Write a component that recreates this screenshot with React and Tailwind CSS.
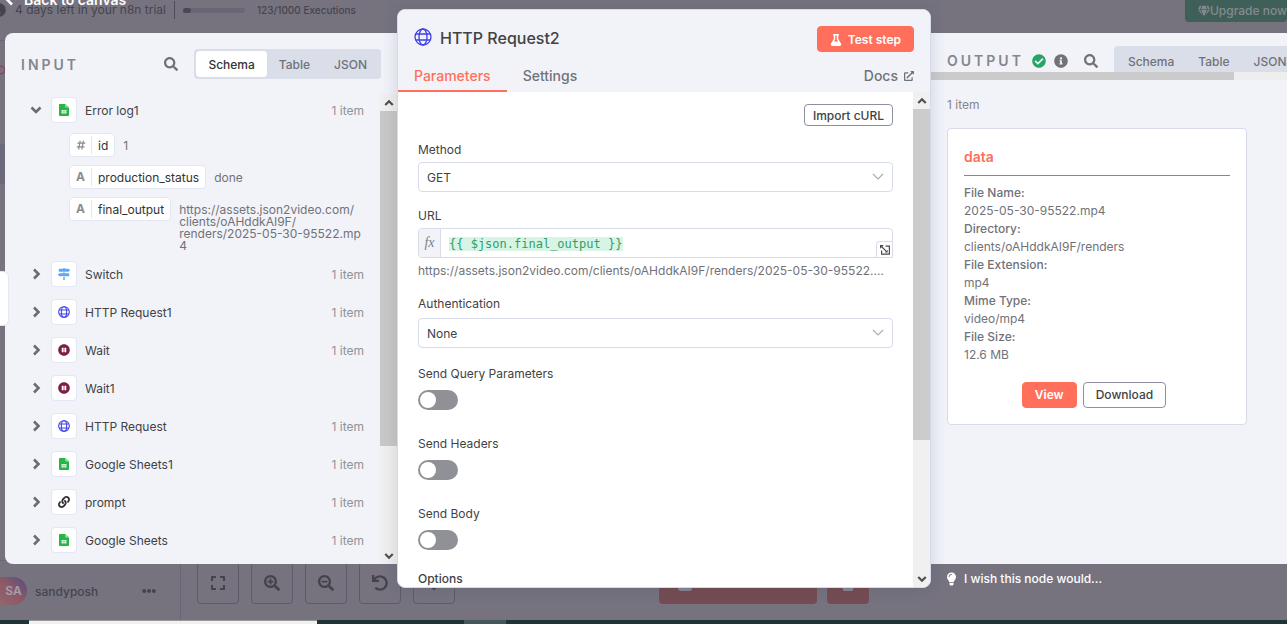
import React from "react";
import {
  FaSearch, FaSearchPlus, FaSearchMinus, FaFlask, FaExternalLinkAlt, FaMapSigns, FaGem, FaUndo,
  FaExpand, FaLink, FaInfoCircle, FaCheckCircle, FaLightbulb, FaHashtag, FaPauseCircle, FaHeart,
  FaEllipsisH, FaTrash,
} from "react-icons/fa";

const chevronPaths = {
  down: "M1.5 3.5L6 8l4.5-4.5",
  up: "M1.5 8.5L6 4l4.5 4.5",
  right: "M4 1.5L8.5 6L4 10.5",
  left: "M8 1.5L3.5 6L8 10.5",
};

function Chevron({ dir, className }) {
  return (
    <svg viewBox="0 0 12 12" className={className} fill="none" stroke="currentColor" strokeWidth="2.6" aria-hidden="true">
      <path d={chevronPaths[dir]} />
    </svg>
  );
}

function Globe({ className, stroke = 2.6 }) {
  return (
    <svg viewBox="0 0 36 36" className={className} fill="none" stroke="#3f40e8" strokeWidth={stroke} aria-hidden="true">
      <circle cx="18" cy="18" r="16" />
      <ellipse cx="18" cy="18" rx="8" ry="16" />
      <path d="M3.5 12h29M3.5 24h29" />
    </svg>
  );
}

function Sheet({ className }) {
  return (
    <svg viewBox="0 0 20 24" className={className} aria-hidden="true">
      <path fill="#28b446" d="M1.5 0H13v6.5h7V22.5A1.5 1.5 0 0 1 18.5 24h-17A1.5 1.5 0 0 1 0 22.5v-21A1.5 1.5 0 0 1 1.5 0z" />
      <path fill="#7fd592" d="M13 0l7 6.5h-7z" />
      <path fill="#e6f7ea" d="M5 12h10v7H5z" />
      <path stroke="#28b446" strokeWidth="0.7" fill="none" d="M5 15.5h10M10 12v7" />
    </svg>
  );
}

const icons = {
  sheet: <Sheet className="h-3 w-2.5" />,
  switch: <FaMapSigns className="size-3 text-[#5fa8f5]" />,
  http: <Globe className="size-3" stroke={3.2} />,
  wait: <FaPauseCircle className="size-3 text-[#7d1f45]" />,
  link: <FaLink className="size-3 text-[#333]" />,
};

const nodes = [
  ["Switch", "switch", "1 item"],
  ["HTTP Request1", "http", "1 item"],
  ["Wait", "wait", "1 item"],
  ["Wait1", "wait", ""],
  ["HTTP Request", "http", "1 item"],
  ["Google Sheets1", "sheet", "1 item"],
  ["prompt", "link", "1 item"],
  ["Google Sheets", "sheet", "1 item"],
];

function NodeRow({ name, icon, count, open }) {
  return (
    <button type="button" aria-expanded={!!open} className="flex h-[26px] w-full items-center pr-4 pl-6 text-left">
      <span className="flex w-[22px] items-center pl-px text-[#6b6b70]">
        <Chevron dir={open ? "down" : "right"} className="size-3" />
      </span>
      <span className="flex size-[26px] items-center justify-center rounded border border-[#e3e7f3] bg-white">{icons[icon]}</span>
      <span className="ml-2 flex-1 pt-0.5 leading-[18px] text-[#414244]">{name}</span>
      <span className="pt-0.5 leading-[18px] text-[#909298]">{count}</span>
    </button>
  );
}

function Field({ type, name, children }) {
  return (
    <div className="flex items-start">
      <div className="flex h-6 shrink-0 items-center rounded border border-[#e3e7f3] bg-white">
        <span className="flex w-[22px] items-center justify-center border-r border-[#e3e7f3] leading-[18px] font-bold text-[#8b8c92]">
          {type === "#" ? <FaHashtag className="my-1 size-2.5" /> : "A"}
        </span>
        <span className="px-1.5 pt-0.5 leading-[18px] text-[#333]">{name}</span>
      </div>
      <div className="ml-2 pt-[7px] leading-3 whitespace-nowrap text-[#717278]">{children}</div>
    </div>
  );
}

function ViewTabs({ active }) {
  return (
    <div className="flex h-[30px] shrink-0 rounded bg-[#dadee9] p-0.5 font-medium">
      {["Schema", "Table", "JSON"].map((t) => (
        <button
          key={t}
          type="button"
          className={t === active ? "rounded bg-white px-3 pt-0.5 text-[#333]" : "rounded px-3 pt-0.5 text-[#717278]"}
        >
          {t}
        </button>
      ))}
    </div>
  );
}

function ScrollBar({ thumb }) {
  return (
    <div className="flex w-[17px] shrink-0 flex-col bg-[#f0f0f0] text-[#505050]" aria-hidden="true">
      <div className="flex h-[17px] items-center justify-center"><Chevron dir="up" className="size-2.5" /></div>
      <div className={thumb} />
      <div className="flex-1" />
      <div className="flex h-[17px] items-center justify-center"><Chevron dir="down" className="size-2.5" /></div>
    </div>
  );
}

function SelectField({ id, label, value, options, gap }) {
  return (
    <div className={gap}>
      <label htmlFor={id} className="leading-5">{label}</label>
      <div className="relative">
        <select id={id} defaultValue={value} className="block h-[30px] w-full appearance-none rounded border border-[#d8dcea] bg-white px-2 pt-0.5 text-[#414244]">
          {options.map((o) => <option key={o}>{o}</option>)}
        </select>
        <svg viewBox="0 0 12 8" className="pointer-events-none absolute top-[11px] right-[9px] h-2 w-3" fill="none" stroke="#a9abb3" strokeWidth="1.1" aria-hidden="true">
          <path d="M1 1l5 5 5-5" />
        </svg>
      </div>
    </div>
  );
}

function Toggle({ id, label }) {
  return (
    <div className="flex flex-col items-start gap-1.5">
      <label htmlFor={id} className="leading-5">{label}</label>
      <input
        id={id}
        type="checkbox"
        role="switch"
        className="h-5 w-10 appearance-none rounded-full bg-[#909197] p-0.5 before:block before:size-4 before:rounded-full before:bg-white checked:bg-[#28a466] checked:before:ml-5"
      />
    </div>
  );
}

function Backdrop() {
  const control = "flex size-[42px] items-center justify-center rounded border border-[#5d5b68] text-[#44434d]";
  return (
    <div className="absolute inset-0 flex flex-col bg-[#76737f] text-[#45444e]">
      <header className="flex h-[41px] items-start border-b border-[#6a6874]">
        <div className="flex h-5 items-center">
          <span className="w-[15px]"><FaInfoCircle className="-ml-2 size-3.5" /></span>
          <span className="leading-[18px]">4 days left in your n8n trial</span>
          <span className="ml-2 h-[18px] w-px bg-[#4c4a56]" />
          <span className="ml-2 h-[5px] w-[62px] rounded-full bg-[#696678]"><span className="block h-[5px] w-2 rounded-full bg-[#4a4853]" /></span>
          <span className="ml-3 text-[10px] leading-[18px] font-medium">123/1000 Executions</span>
        </div>
        <button type="button" className="ml-auto flex h-[22px] items-center rounded-b bg-[#3f6059] pl-[13px] font-medium text-[#858a90]">
          <FaGem className="size-3" />Upgrade now
        </button>
      </header>
      <div className="flex min-h-0 flex-1">
        <aside className="flex w-[181px] flex-col border-r border-[#686676]">
          <svg viewBox="0 0 10 10" className="mt-6 -ml-1 size-2.5" fill="none" stroke="#8a4768" strokeWidth="1.6" aria-hidden="true">
            <circle cx="5" cy="5" r="3.8" />
          </svg>
          <div className="mt-[69px] h-10 bg-[#6c6a7b]" />
          <div className="mt-auto flex h-[60px] items-center border-t border-[#6a6874]">
            <span className="flex h-7 w-[27px] items-center justify-center rounded-r-full bg-linear-to-bl from-[#4e4a86] via-[#8d5866] to-[#92666c] font-semibold text-[#a3a0ac]">SA</span>
            <span className="ml-2 pt-0.5 leading-[18px] font-medium">sandyposh</span>
            <FaEllipsisH className="mr-6 ml-auto size-3.5" />
          </div>
        </aside>
        <div className="flex flex-1 items-end gap-3 pb-4 pl-4">
          <button type="button" aria-label="Fit view" className={control}><FaExpand className="size-4" /></button>
          <button type="button" aria-label="Zoom in" className={control}><FaSearchPlus className="size-4" /></button>
          <button type="button" aria-label="Zoom out" className={control}><FaSearchMinus className="size-4" /></button>
          <button type="button" aria-label="Reset zoom" className={control}><FaUndo className="size-4" /></button>
          <button type="button" aria-label="Tidy up" className={control}><FaHeart className="size-4" /></button>
          <div className="ml-48 flex gap-2.5">
            <button type="button" className="flex h-[42px] w-[158px] items-center justify-center gap-2.5 rounded bg-[#754c53] text-sm font-semibold text-[#8b8492]"><FaFlask className="size-4" />Test workflow</button>
            <button type="button" aria-label="Delete" className="flex size-[42px] items-center justify-center rounded bg-[#754c53] text-[#8b8492]"><FaTrash className="size-4" /></button>
          </div>
        </div>
      </div>
      <div className="flex h-1 bg-[#1f3436]">
        <div className="ml-[29px] w-72 border-t border-[#9a9a9a] bg-[#f1f1f1]" />
        <div className="ml-[147px] w-[42px] bg-[#46575a]" />
      </div>
    </div>
  );
}

function InputPanel() {
  return (
    <section className="mt-[33px] mb-[60px] flex min-w-0 flex-col overflow-hidden rounded-l-lg bg-[#f1f3f9]">
      <div className="flex items-center pt-4 pr-4 pb-[15px] pl-4">
        <h2 className="pt-0.5 text-sm font-semibold tracking-[3px] text-[#85868e]">INPUT</h2>
        <button type="button" aria-label="Search" className="mr-4 ml-auto text-[#717278]"><FaSearch className="size-3.5" /></button>
        <ViewTabs active="Schema" />
      </div>
      <div className="flex min-h-0 flex-1">
        <div className="min-w-0 flex-1 overflow-hidden pt-[3px]">
          <NodeRow name="Error log1" icon="sheet" count="1 item" open />
          <div className="mt-2.5 flex flex-col gap-2 pl-16">
            <Field type="#" name="id">1</Field>
            <Field type="A" name="production_status">done</Field>
            <Field type="A" name="final_output">
              https://assets.json2video.com/<br />clients/oAHddkAI9F/<br />renders/2025-05-30-95522.mp<br />4
            </Field>
          </div>
          <div className="mt-[9px] flex flex-col gap-3">
            {nodes.map(([name, icon, count]) => <NodeRow key={name} name={name} icon={icon} count={count} />)}
          </div>
        </div>
        <ScrollBar thumb="h-[335px] bg-[#c8c8c8]" />
      </div>
    </section>
  );
}

function MainPanel() {
  return (
    <main className="relative z-10 mt-[9px] mb-9 flex flex-col overflow-hidden rounded-lg border border-[#d6dae8] bg-white shadow-[0_0_16px_rgba(50,60,90,0.18)]">
      <div className="bg-[#f1f3f9]">
        <div className="flex items-start px-4 pt-4">
          <Globe className="mt-0.5 size-[18px]" />
          <h1 className="ml-2 text-base leading-6 font-medium text-[#414244]">HTTP Request2</h1>
          <button type="button" className="ml-auto flex h-[26px] items-center gap-1.5 rounded border border-[#ff6f5c] bg-[#ff6f5c] px-3 pt-0.5 font-semibold text-white">
            <FaFlask className="size-3" />Test step
          </button>
        </div>
        <div className="mt-2 flex h-8 text-sm font-medium">
          <button type="button" className="border-b-2 border-[#ff6f5c] px-4 pt-0.5 text-[#ff6f5c]">Parameters</button>
          <button type="button" className="border-b-2 border-transparent px-4 pt-0.5 text-[#717278]">Settings</button>
          <a href="#docs" className="ml-auto flex items-center gap-1.5 px-4 text-[#717278]">Docs<FaExternalLinkAlt className="size-2.5" /></a>
        </div>
      </div>
      <div className="flex min-h-0 flex-1">
        <form className="flex min-w-0 flex-1 flex-col overflow-hidden px-5 pt-3 text-[#414244]">
          <button type="button" className="h-[22px] shrink-0 self-end rounded border border-[#8d90a0] px-2 pt-0.5 leading-4 font-medium">Import cURL</button>
          <div className="mt-3.5 flex flex-col gap-3.5">
            <SelectField id="method" label="Method" value="GET" options={["GET", "POST", "PUT", "DELETE"]} gap="flex flex-col gap-0.5" />
            <div className="flex flex-col">
              <label htmlFor="url" className="mb-0.5 leading-5">URL</label>
              <div className="relative flex h-[30px] items-stretch overflow-hidden rounded rounded-br-none border border-[#d8dcea]">
                <span className="flex w-[22px] items-center justify-center border-r border-[#d8dcea] bg-[#f1f3f9] font-['Liberation_Serif',serif] text-[14px] text-[#7d7e88] italic">fx</span>
                <input id="url" defaultValue="{{ $json.final_output }}" className="mt-2 ml-2 h-3.5 w-[174px] bg-[#d7f4e5] font-['DejaVu_Sans_Mono',monospace] leading-[14px] text-[#2e9f69] outline-none" />
                <button type="button" aria-label="Open expression editor" className="absolute right-0 bottom-0 flex size-4 items-center justify-center rounded-tl border-t border-l border-[#d8dcea] bg-white">
                  <svg viewBox="0 0 10 10" className="size-2.5" fill="none" stroke="#4a4a50" strokeWidth="1.2" aria-hidden="true">
                    <path d="M5.5 1.2h3.9v8H1.6V5.6" />
                    <path d="M1 1l5.8 5.8" />
                    <path d="M0 0h3.8L0 3.8z" fill="#4a4a50" stroke="none" />
                    <path d="M7.6 4.8v2.8H4.8z" fill="#4a4a50" stroke="none" />
                  </svg>
                </button>
              </div>
              <p className="mt-1 truncate leading-[18px] text-[#717278]">https://assets.json2video.com/clients/oAHddkAI9F/renders/2025-05-30-95522.mp4</p>
            </div>
            <SelectField id="auth" label="Authentication" value="None" options={["None", "Generic Credential Type"]} gap="flex flex-col gap-1" />
          </div>
          <div className="mt-4 flex flex-col gap-6">
            <Toggle id="query" label="Send Query Parameters" />
            <Toggle id="headers" label="Send Headers" />
            <Toggle id="body" label="Send Body" />
          </div>
          <h3 className="mt-5 shrink-0 leading-[18px] font-medium">Options</h3>
        </form>
        <ScrollBar thumb="h-[331px] bg-[#cccccc]" />
      </div>
    </main>
  );
}

function OutputPanel() {
  const rows = [
    ["File Name:", "2025-05-30-95522.mp4"],
    ["Directory:", "clients/oAHddkAI9F/renders"],
    ["File Extension:", "mp4"],
    ["Mime Type:", "video/mp4"],
    ["File Size:", "12.6 MB"],
  ];
  return (
    <div className="mt-[33px] flex min-w-0 flex-col overflow-hidden">
      <section className="flex min-h-0 flex-1 flex-col bg-[#f1f3f9]">
        <div className="flex h-[39px] items-start overflow-hidden pt-[13px] pl-4">
          <div className="flex h-[30px] shrink-0 items-center">
            <h2 className="text-sm font-semibold tracking-[3px] text-[#85868e]">OUTPUT</h2>
            <FaCheckCircle className="ml-2 size-3.5 text-[#28a466]" />
            <FaInfoCircle className="ml-2 size-3.5 text-[#717278]" />
            <button type="button" aria-label="Search output" className="mx-4 text-[#717278]"><FaSearch className="size-3.5" /></button>
          </div>
          <ViewTabs />
        </div>
        <div className="h-2 bg-[#eeeeee]"><div className="h-2 w-[85%] bg-[#cbcbcb]" /></div>
        <p className="mt-4 pl-4 leading-[18px] text-[#85868e]">1 item</p>
        <article className="mt-3.5 ml-4 w-[300px] rounded border border-[#d8dcea] bg-white p-4">
          <h3 className="border-b border-[#85868e] pt-0.5 pb-2 text-sm leading-5 font-semibold text-[#ff6f5c]">data</h3>
          <dl className="mt-2 leading-[18px] text-[#717278]">
            {rows.map(([k, v]) => (
              <React.Fragment key={k}>
                <dt className="font-medium">{k}</dt>
                <dd>{v}</dd>
              </React.Fragment>
            ))}
          </dl>
          <div className="mt-[18px] flex justify-center font-medium">
            <button type="button" className="mr-1.5 h-[26px] rounded border border-[#ff6f5c] bg-[#ff6f5c] px-3 font-semibold text-white">View</button>
            <button type="button" className="mr-1.5 h-[26px] rounded border border-[#8d90a0] bg-white px-3 text-[#414244]">Download</button>
          </div>
        </article>
      </section>
      <a href="#feedback" className="flex h-[60px] items-start gap-2 pt-1.5 pl-4 font-medium text-white">
        <FaLightbulb className="mt-0.5 h-3.5 w-[9px]" /><span className="leading-[18px]">I wish this node would...</span>
      </a>
    </div>
  );
}

export default function App() {
  return (
    <div className="relative h-screen overflow-hidden font-['Inter',sans-serif] text-xs">
      <Backdrop />
      <div className="absolute inset-0 grid grid-cols-[392fr_534px_356fr] pl-[5px]">
        <InputPanel />
        <MainPanel />
        <OutputPanel />
      </div>
      <a href="#canvas" className="absolute -top-2.5 left-1 flex items-center gap-2 text-sm leading-5 font-semibold text-white">
        <Chevron dir="left" className="size-3" />Back to canvas
      </a>
      <div className="absolute top-[271px] left-0 h-[55px] w-[9px] rounded-r-md border border-l-0 border-[#e3e7f3] bg-white" />
    </div>
  );
}
